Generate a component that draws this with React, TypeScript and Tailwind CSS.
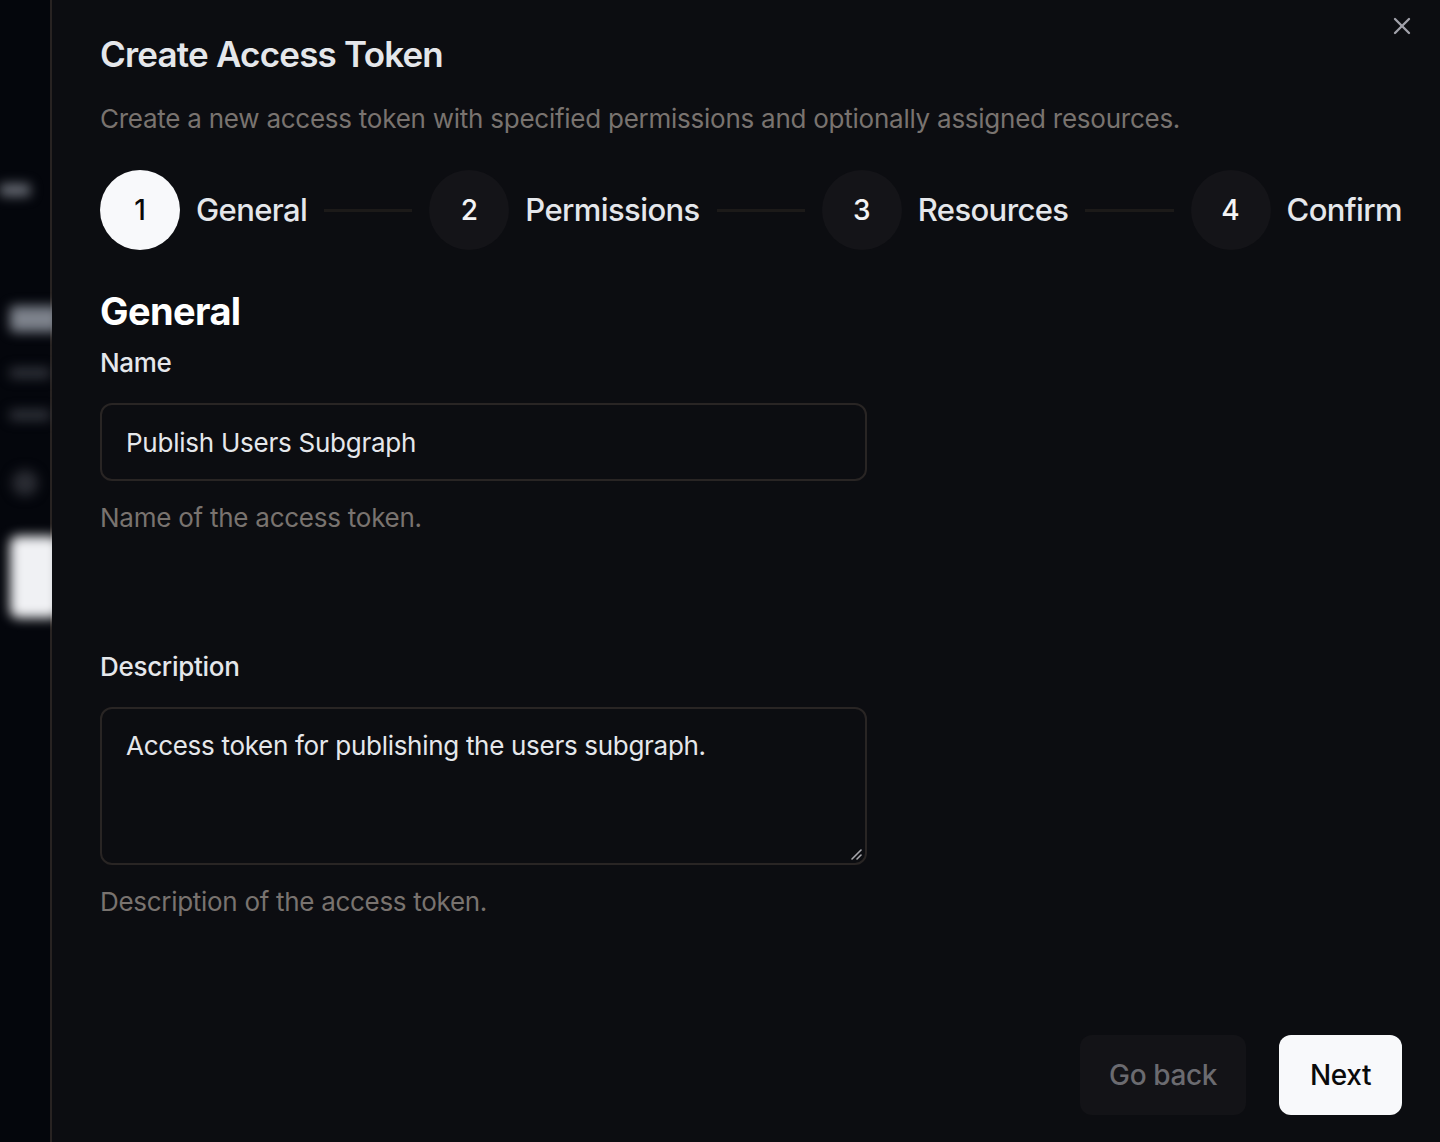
import React from "react";

const font = { fontFamily: "Inter, 'Noto Sans', sans-serif" };

function Step({ n, label, active }: { n: number; label: string; active?: boolean }) {
  return (
    <div className="flex items-center gap-4 shrink-0">
      <div
        className={
          active
            ? "w-20 h-20 rounded-full bg-[#f8f9fb] text-[#0a0a0a] flex items-center justify-center text-[28px] font-medium"
            : "w-20 h-20 rounded-full bg-[#141418] text-[#f4f4f5] flex items-center justify-center text-[28px] font-medium"
        }
      >
        {n}
      </div>
      <span className="text-[31px] font-medium text-[#e5e7eb] tracking-[-0.6px]">{label}</span>
    </div>
  );
}

function Line() {
  return <div className="flex-1 h-[3px] bg-[#1c1a19] mx-[17px]" />;
}

export default function App() {
  return (
    <div className="w-[1440px] h-[1142px] flex bg-[#04060c] overflow-hidden" style={font}>
      {/* blurred background */}
      <div className="w-[50px] shrink-0 flex flex-col blur-[6px]">
        <div className="mt-[184px] h-[12px] w-[30px] bg-[#6b6f78]" />
        <div className="mt-[110px] ml-[10px] h-[26px] w-[50px] bg-[#7d828c] rounded" />
        <div className="mt-[36px] ml-[10px] h-[10px] w-[40px] bg-[#33363e]" />
        <div className="mt-[32px] ml-[10px] h-[10px] w-[40px] bg-[#33363e]" />
        <div className="mt-[50px] ml-[12px] h-[26px] w-[26px] rounded-full bg-[#2a2c33]" />
        <div className="mt-[40px] ml-[10px] h-[82px] w-[50px] rounded-lg bg-[#f0f1f4]" />
      </div>
      <div className="w-[2px] shrink-0 bg-[#282322]" />
      {/* panel */}
      <div className="flex-1 bg-[#0c0d11] flex flex-col pl-[48px] pr-[38px] pb-[27px] relative">
        <button className="absolute right-[24px] top-[12px] text-[#a1a1aa]">
          <svg width="28" height="28" viewBox="0 0 24 24" fill="none" stroke="currentColor" strokeWidth="2" strokeLinecap="round">
            <path d="M18 6 6 18" />
            <path d="m6 6 12 12" />
          </svg>
        </button>
        <h1 className="mt-[34px] text-[35px] leading-[40px] font-semibold text-[#e5e7eb] tracking-[-0.8px]">
          Create Access Token
        </h1>
        <p className="mt-[27px] text-[26px] leading-[36px] text-[#79736f] tracking-[-0.25px]">
          Create a new access token with specified permissions and optionally assigned resources.
        </p>
        <div className="mt-[33px] flex items-center">
          <Step n={1} label="General" active />
          <Line />
          <Step n={2} label="Permissions" />
          <Line />
          <Step n={3} label="Resources" />
          <Line />
          <Step n={4} label="Confirm" />
        </div>
        <h2 className="mt-[39px] text-[38px] leading-[44px] font-bold text-white tracking-[-0.6px]">General</h2>
        <label className="mt-[13px] text-[26px] leading-[34px] font-medium text-[#e5e7eb] tracking-[-0.3px]">Name</label>
        <div className="mt-[23px] w-[767px] h-[78px] rounded-[12px] border-2 border-[#292524] flex items-center px-[24px] text-[26px] text-[#e5e7eb] tracking-[-0.25px]">
          Publish Users Subgraph
        </div>
        <p className="mt-[20px] text-[26px] leading-[34px] text-[#79736f] tracking-[-0.25px]">Name of the access token.</p>
        <label className="mt-[115px] text-[26px] leading-[34px] font-medium text-[#e5e7eb] tracking-[-0.3px]">Description</label>
        <div className="relative mt-[23px] w-[767px] h-[158px]">
          <textarea
            readOnly
            defaultValue="Access token for publishing the users subgraph."
            className="w-full h-full resize-none rounded-[12px] border-2 border-[#292524] bg-transparent px-[24px] pt-[20px] text-[26px] leading-[34px] text-[#e5e7eb] tracking-[-0.3px] outline-none"
            style={font}
          />
          <svg className="absolute right-[4px] bottom-[4px]" width="14" height="14" viewBox="0 0 14 14" stroke="#a8a8ad" strokeWidth="1.6" strokeLinecap="round">
            <path d="M12 3 3 12" />
            <path d="M12 8 8 12" />
          </svg>
        </div>
        <p className="mt-[20px] text-[26px] leading-[34px] text-[#79736f] tracking-[-0.3px]">Description of the access token.</p>
        <div className="flex-1" />
        <div className="flex justify-end gap-[33px]">
          <button className="w-[166px] h-[80px] rounded-[12px] bg-[#131317] text-[#6b6b70] text-[28px] font-medium tracking-[-0.4px]">
            Go back
          </button>
          <button className="w-[123px] h-[80px] rounded-[12px] bg-[#f8f9fb] text-[#0a0a0a] text-[28px] font-medium tracking-[-0.4px]">
            Next
          </button>
        </div>
      </div>
    </div>
  );
}
